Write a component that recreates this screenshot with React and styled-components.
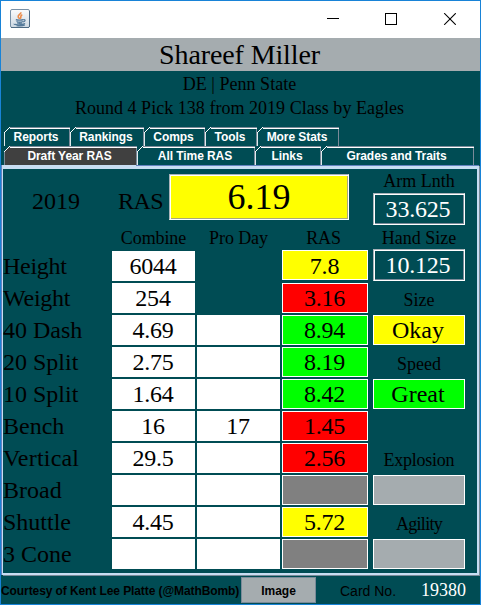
import React from "react";
import styled, { createGlobalStyle } from "styled-components";

const COLORS = {
  yellow: "#ffff00",
  red: "#ff0000",
  green: "#00ff00",
  gray: "#808080",
  silver: "#a5acaf",
};

const TOP_TABS = [
  { name: "Reports", width: 66 },
  { name: "Rankings", width: 74 },
  { name: "Comps", width: 61 },
  { name: "Tools", width: 52 },
  { name: "More Stats", width: 82 },
];

const BOTTOM_TABS = [
  { name: "Draft Year RAS", width: 133, active: true },
  { name: "All Time RAS", width: 118 },
  { name: "Links", width: 66 },
  { name: "Grades and Traits", width: 153 },
];

const ROWS = [
  { label: "Height", spacing: -0.3, combine: "6044", ras: "7.8", color: "yellow", noProDay: true },
  { label: "Weight", spacing: -0.25, combine: "254", ras: "3.16", color: "red", noProDay: true },
  { label: "40 Dash", combine: "4.69", ras: "8.94", color: "green" },
  { label: "20 Split", combine: "2.75", ras: "8.19", color: "green" },
  { label: "10 Split", combine: "1.64", ras: "8.42", color: "green" },
  { label: "Bench", combine: "16", proDay: "17", ras: "1.45", color: "red" },
  { label: "Vertical", spacing: 0.2, combine: "29.5", ras: "2.56", color: "red" },
  { label: "Broad", color: "gray" },
  { label: "Shuttle", combine: "4.45", ras: "5.72", color: "yellow" },
  { label: "3 Cone", color: "gray" },
];

const GRADES = [
  { label: "Size", value: "Okay", color: "yellow" },
  { label: "Speed", value: "Great", color: "green" },
  { label: "Explosion", spacing: -0.25, color: "silver", gap: 32 },
  { label: "Agility", spacing: -0.7, color: "silver" },
];

const JavaIcon = () => (
  <svg width="20" height="19" viewBox="0 0 20 19">
    <defs>
      <linearGradient id="frame" x1="0" y1="0" x2="0" y2="1">
        <stop offset="0" stopColor="#fafbfc" />
        <stop offset="1" stopColor="#cdd8e2" />
      </linearGradient>
    </defs>
    <rect x="0.5" y="0.5" width="19" height="18" rx="1.5" fill="url(#frame)" stroke="#7890a6" />
    <path d="M1 18.5h18M19.5 2v16" stroke="#4d6a84" />
    <path d="M10.8 3.3C11.5 5.2 7.4 5.8 8.2 8C8.5 8.8 9.4 9.2 9.2 10M12.3 5.8C9.5 6.7 11.8 8.1 10.2 9.8" fill="none" stroke="#ec8a48" strokeWidth="1.6" />
    <path d="M5.8 10.6c1.5.7 5.8.7 7.4 0M6.5 12.5c1.4.6 5 .6 6.4 0M7 14c1.5.5 3.8.5 5.2 0M13.2 10.8c2.7-.9 2.4 1.7-.1 2.1M4.2 14.8c-1 1 7.7 1.7 10.9-.2M6.5 16.6c3 .4 6.5.2 8.4-.6" fill="none" stroke="#557a9a" strokeWidth="1.2" />
  </svg>
);

const Tabs = ({ items }) => (
  <TabRow>
    {items.map((tab) => (
      <Tab key={tab.name} $width={tab.width} $active={tab.active}>
        {tab.name}
      </Tab>
    ))}
  </TabRow>
);

const App = () => {
  return (
    <Window>
      <GlobalStyle />
      <TitleBar>
        <JavaIcon />
        <Controls>
          <svg width="12" height="12" shapeRendering="crispEdges">
            <path d="M0 5.5h12" stroke="#000" />
          </svg>
          <svg width="12" height="12" shapeRendering="crispEdges">
            <rect x="0.5" y="0.5" width="11" height="11" fill="none" stroke="#000" />
          </svg>
          <svg width="13" height="12">
            <path d="M1.2 0.2L12.8 11.8M12.8 0.2L1.2 11.8" stroke="#000" strokeWidth="1.1" />
          </svg>
        </Controls>
      </TitleBar>
      <PlayerName>Shareef Miller</PlayerName>
      <PlayerInfo>
        <p>DE | Penn State</p>
        <p>Round 4 Pick 138 from 2019 Class by Eagles</p>
      </PlayerInfo>
      <Tabs items={TOP_TABS} />
      <Tabs items={BOTTOM_TABS} />
      <Panel>
        <Main>
          <Summary>
            <Year>2019</Year>
            <RasLabel>RAS</RasLabel>
            <TotalScore>6.19</TotalScore>
          </Summary>
          <Headings>
            <span />
            <span>Combine</span>
            <span>Pro Day</span>
            <span>RAS</span>
          </Headings>
          {ROWS.map((row, i) => (
            <Row key={row.label}>
              <RowLabel $spacing={row.spacing}>{row.label}</RowLabel>
              <Cell>{row.combine}</Cell>
              {row.noProDay ? <span /> : <Cell>{row.proDay}</Cell>}
              <Score $color={COLORS[row.color]} $raised={i === 0}>
                {row.ras}
              </Score>
            </Row>
          ))}
        </Main>
        <Side>
          <SideLabel $height={24} $line={24}>
            Arm Lnth
          </SideLabel>
          <Measure>33.625</Measure>
          <SideLabel $height={24} $line={26}>
            Hand Size
          </SideLabel>
          <Measure>10.125</Measure>
          {GRADES.map((grade) => (
            <React.Fragment key={grade.label}>
              <SideLabel $height={34} $line={38} $gap={grade.gap} $spacing={grade.spacing}>
                {grade.label}
              </SideLabel>
              <Grade $color={COLORS[grade.color]}>{grade.value}</Grade>
            </React.Fragment>
          ))}
        </Side>
      </Panel>
      <Footer>
        <Credit>Courtesy of Kent Lee Platte (@MathBomb)</Credit>
        <ImageButton>Image</ImageButton>
        <CardLabel>Card No.</CardLabel>
        <CardNumber>19380</CardNumber>
      </Footer>
    </Window>
  );
};

export default App;

const GlobalStyle = createGlobalStyle`
  * {
    box-sizing: border-box;
  }

  body {
    margin: 0;
    overflow: hidden;
  }

  p {
    margin: 0;
  }
`;

const Window = styled.div`
  width: 481px;
  height: 605px;
  display: flex;
  flex-direction: column;
  border: 1px solid #1883d7;
  background: #004c54;
  color: #000;
  font-family: "Liberation Serif", "Times New Roman", serif;
  white-space: nowrap;
`;

const TitleBar = styled.div`
  height: 37px;
  flex: none;
  display: flex;
  justify-content: space-between;
  align-items: flex-start;
  padding: 8px 24px 0 9px;
  background: #fff;
`;

const Controls = styled.div`
  display: flex;
  gap: 46px;
  padding-top: 4px;

  svg {
    display: block;
  }
`;

const PlayerName = styled.div`
  height: 33px;
  flex: none;
  padding-right: 2px;
  background: #a5acaf;
  font-size: 28px;
  line-height: 33px;
  letter-spacing: -0.12px;
  text-align: center;
`;

const PlayerInfo = styled.div`
  height: 56px;
  flex: none;
  padding: 1px 2px 0 0;
  font-size: 18px;
  line-height: 24px;
  letter-spacing: 0.03px;
  text-align: center;
`;

const TabRow = styled.div`
  height: 19px;
  flex: none;
  display: flex;
  padding-left: 3px;
`;

const Tab = styled.div`
  position: relative;
  width: ${(props) => props.$width}px;
  height: 19px;
  padding-right: 3px;
  border-top: 1px solid #7a8a99;
  border-left: 1px solid ${(props) => (props.$active ? "#7a8a99" : "#dfe9ec")};
  box-shadow: inset 0 1px #fff, inset -1px 0 #7a8a99;
  background: ${(props) => (props.$active ? "#404040" : "#004c54")};
  color: #fff;
  font: bold 12px/19px "Liberation Sans", Arial, sans-serif;
  letter-spacing: -0.07px;
  text-align: center;

  /* cut off corner */
  &::before {
    content: "";
    position: absolute;
    top: -1px;
    left: -1px;
    width: 6px;
    height: 6px;
    background: linear-gradient(
      135deg,
      #004c54 44%,
      #fff 45% 56%,
      ${(props) => (props.$active ? "#404040" : "#004c54")} 57%
    );
  }
`;

const Panel = styled.div`
  position: relative;
  height: 410px;
  flex: none;
  display: flex;
  margin: 0 1px 1px;
  border: solid #c8ddf2;
  border-width: 4px 2px 2px 1px;
  box-shadow: 1px 1px #7a8a99, -1px 0 #6382bf;

  /* edge under the tabs that are not selected */
  &::before {
    content: "";
    position: absolute;
    top: -4px;
    left: 133px;
    right: -2px;
    height: 1px;
    background: #6382bf;
  }
`;

const Main = styled.div`
  width: 370px;
`;

const Summary = styled.div`
  height: 58px;
  display: flex;
  padding-top: 5px;
  font-size: 24px;
`;

const Year = styled.div`
  width: 115px;
  padding-left: 29px;
  line-height: 55px;
`;

const RasLabel = styled.div`
  width: 51px;
  line-height: 55px;
  letter-spacing: -0.6px;
`;

const TotalScore = styled.div`
  width: 180px;
  height: 46px;
  border: 1px solid #a9b2b9;
  border-right-color: #fff;
  border-bottom-color: #fff;
  box-shadow: inset 1px 1px #fff, inset -1px -1px #a9a97a;
  background: #ffff00;
  font-size: 36px;
  line-height: 44px;
  text-align: center;
`;

const Headings = styled.div`
  height: 24px;
  display: grid;
  grid-template-columns: 107px 83px 83px 83px;
  column-gap: 2px;
  font-size: 18px;
  line-height: 23px;
  letter-spacing: -0.1px;
  text-align: center;
`;

const Row = styled.div`
  height: 32px;
  display: grid;
  grid-template-columns: 107px 83px 83px 86px;
  column-gap: 2px;
  font-size: 24px;
  line-height: 30px;
  text-align: center;
`;

const RowLabel = styled.div`
  letter-spacing: ${(props) => props.$spacing || 0}px;
  text-align: left;
`;

const Cell = styled.div`
  height: 30px;
  padding-right: 1px;
  background: #fff;
  letter-spacing: -0.2px;
`;

const Score = styled.div`
  height: 30px;
  margin-top: ${(props) => (props.$raised ? "-1px" : "0")};
  padding-right: 1px;
  border: 1px solid #fff;
  background: ${(props) => props.$color};
  line-height: ${(props) => (props.$raised ? "30px" : "28px")};
  letter-spacing: -0.2px;
`;

const Side = styled.div`
  width: 92px;
  text-align: center;
`;

const SideLabel = styled.div`
  height: ${(props) => props.$height}px;
  margin-top: ${(props) => props.$gap || 0}px;
  font-size: 18px;
  line-height: ${(props) => props.$line}px;
  letter-spacing: ${(props) => props.$spacing || 0}px;
`;

const Measure = styled.div`
  height: 32px;
  padding-right: 2px;
  border: 1px solid #fff;
  border-top-color: #a9b2b9;
  border-left-color: #a9b2b9;
  box-shadow: inset 1px 1px #fff, inset -1px -1px #7a8a99;
  color: #fff;
  font-size: 24px;
  line-height: 31px;
  letter-spacing: -0.2px;
`;

const Grade = styled.div`
  height: 30px;
  padding-right: 2px;
  border: 1px solid #fff;
  background: ${(props) => props.$color};
  font-size: 24px;
  line-height: 28px;
`;

const Footer = styled.div`
  flex: 1;
  display: flex;
  line-height: 29px;
`;

const Credit = styled.div`
  width: 240px;
  font: bold 12px/31px "Liberation Sans", Arial, sans-serif;
  letter-spacing: -0.09px;
`;

const ImageButton = styled.div`
  width: 75px;
  height: 26px;
  margin-top: 1px;
  border: 1px solid #7a8a99;
  background: #a5acaf;
  font: bold 12px/26px "Liberation Sans", Arial, sans-serif;
  text-align: center;
`;

const CardLabel = styled.div`
  width: 105px;
  padding-left: 24px;
  font: 14px/30px "Liberation Sans", Arial, sans-serif;
`;

const CardNumber = styled.div`
  color: #fff;
  font-size: 18px;
`;
